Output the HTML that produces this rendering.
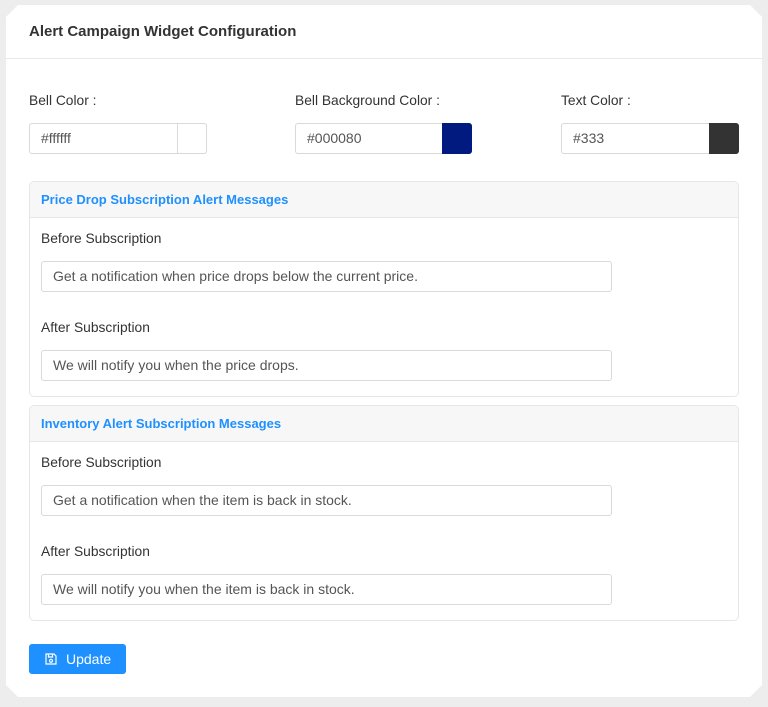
<!DOCTYPE html>
<html><head><style>
*{box-sizing:border-box;margin:0;padding:0}
body{width:768px;height:707px;background:#ededed;font-family:"Liberation Sans","DejaVu Sans",sans-serif;color:#333;position:relative;overflow:hidden}
.card{position:absolute;left:6px;top:5px;width:756px;height:692px;background:#fff;clip-path:polygon(12px 0,calc(100% - 12px) 0,100% 12px,100% calc(100% - 12px),calc(100% - 12px) 100%,12px 100%,0 calc(100% - 12px),0 12px)}
.hd{height:54px;border-bottom:1px solid #e8e8e8;padding:18px 0 0 23px;font-size:15px;font-weight:bold;color:#333}
.lbl{position:absolute;font-size:13.8px;color:#333}
.inp{position:absolute;height:31px;border:1px solid #d9d9d9;border-radius:3px;font-size:14px;color:#555;padding:6px 0 0 11px;background:#fff}
.sw{position:absolute;top:-1px;right:-1px;width:30px;height:31px;border:1px solid #d9d9d9;border-radius:0 3px 3px 0}
.panel{position:absolute;left:23px;width:710px;border:1px solid #e6e6e6;border-radius:5px}
.ph{height:36px;background:#f7f7f7;border-bottom:1px solid #e6e6e6;padding:10px 0 0 11px;color:#1e90ff;font-size:13px;font-weight:bold;border-radius:5px 5px 0 0}
.btn{position:absolute;left:23px;top:639px;width:97px;height:30px;background:#1e90ff;border-radius:3px;color:#fff;font-size:14px;padding:7px 0 0 37px}
</style></head><body>
<div class="card">
<div class="hd">Alert Campaign Widget Configuration</div>
<div class="lbl" style="left:23px;top:88px">Bell Color :</div>
<div class="lbl" style="left:289px;top:88px">Bell Background Color :</div>
<div class="lbl" style="left:555px;top:88px">Text Color :</div>
<div class="inp" style="left:23px;top:118px;width:178px">#ffffff<div class="sw" style="background:#fff"></div></div>
<div class="inp" style="left:289px;top:118px;width:177px">#000080<div class="sw" style="background:#001a80;border-color:#001a80"></div></div>
<div class="inp" style="left:555px;top:118px;width:178px">#333<div class="sw" style="background:#333;border-color:#333"></div></div>

<div class="panel" style="top:176px;height:216px">
<div class="ph">Price Drop Subscription Alert Messages</div>
<div class="lbl" style="left:11px;top:49px">Before Subscription</div>
<div class="inp" style="left:11px;top:79px;width:571px">Get a notification when price drops below the current price.</div>
<div class="lbl" style="left:11px;top:138px">After Subscription</div>
<div class="inp" style="left:11px;top:168px;width:571px">We will notify you when the price drops.</div>
</div>

<div class="panel" style="top:400px;height:216px">
<div class="ph">Inventory Alert Subscription Messages</div>
<div class="lbl" style="left:11px;top:49px">Before Subscription</div>
<div class="inp" style="left:11px;top:79px;width:571px">Get a notification when the item is back in stock.</div>
<div class="lbl" style="left:11px;top:138px">After Subscription</div>
<div class="inp" style="left:11px;top:168px;width:571px">We will notify you when the item is back in stock.</div>
</div>

<div class="btn"><svg style="position:absolute;left:16px;top:9px" width="12" height="12" viewBox="0 0 12 12" fill="none" stroke="#fff" stroke-width="1.2"><path d="M1 1h8l2 2v8H1z"/><path d="M3.5 1v3h4V1"/><circle cx="6" cy="7.8" r="1.5"/></svg>Update</div>
</div>
</body></html>
